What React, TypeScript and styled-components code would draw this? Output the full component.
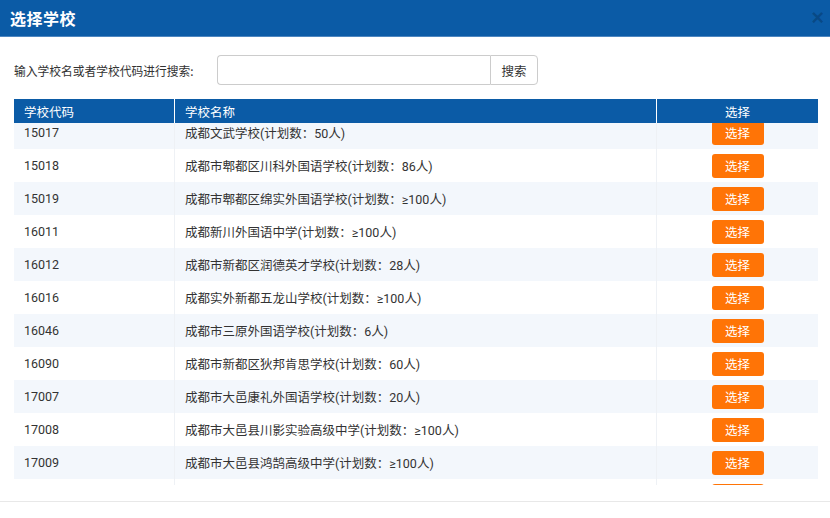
import { useLayoutEffect, useRef } from "react";
import styled, { createGlobalStyle } from "styled-components";

const GlobalStyle = createGlobalStyle`
  html, body {
    margin: 0;
    padding: 0;
    background: #ffffff;
  }
  body {
    font-family: "Noto Sans CJK SC", "Liberation Sans", sans-serif;
    color: #333;
  }
`;

const Modal = styled.div`
  width: 830px;
  height: 518px;
  display: flex;
  flex-direction: column;
  background: #fff;
  overflow: hidden;
`;

const Header = styled.div`
  height: 37px;
  flex-shrink: 0;
  display: flex;
  align-items: center;
  justify-content: space-between;
  padding: 0 10px;
  background: #0b5ba6;
  border-bottom: 1px solid #4d86c0;
  box-sizing: border-box;
`;

const Title = styled.h3`
  margin: 0;
  font-size: 16px;
  font-weight: bold;
  color: #fff;
  letter-spacing: 0.5px;
`;

const Close = styled.span`
  font-family: "Liberation Sans", sans-serif;
  font-size: 22px;
  font-weight: bold;
  color: rgba(0, 0, 0, 0.2);
  line-height: 1;
  margin-right: -4px;
`;

const Body = styled.div`
  flex: 1;
  padding: 18px 12px 0 14px;
  display: flex;
  flex-direction: column;
`;

const SearchRow = styled.div`
  display: flex;
  align-items: center;
  height: 30px;
  margin-bottom: 14px;
`;

const Label = styled.label`
  font-size: 12.5px;
  color: #333;
  width: 203px;
  transform: scaleX(0.94);
  transform-origin: left center;
  white-space: nowrap;
`;

const Input = styled.input`
  width: 273px;
  height: 30px;
  box-sizing: border-box;
  border: 1px solid #ccc;
  border-right: none;
  border-radius: 4px 0 0 4px;
  padding: 0 8px;
  outline: none;
`;

const SearchButton = styled.button`
  width: 48px;
  height: 30px;
  box-sizing: border-box;
  border: 1px solid #ccc;
  border-radius: 0 4px 4px 0;
  background: #fff;
  color: #333;
  font-family: inherit;
  font-size: 12.5px;
  padding: 0;
`;

const Table = styled.div`
  width: 804px;
  display: flex;
  flex-direction: column;
`;

const Row = styled.div<{ $striped?: boolean }>`
  display: grid;
  grid-template-columns: 160px 482px 1fr;
  height: 33px;
  flex-shrink: 0;
  background: ${p => (p.$striped ? "#f3f7fc" : "#fff")};
`;

const HeadRow = styled(Row)`
  height: 24px;
  background: #0b5ba6;
`;

const HeadCell = styled.div<{ $center?: boolean }>`
  display: flex;
  align-items: center;
  justify-content: ${p => (p.$center ? "center" : "flex-start")};
  padding: 0 10px;
  font-size: 12.5px;
  color: #fff;
  & + & {
    border-left: 1px solid #fff;
  }
`;

const Cell = styled.div<{ $center?: boolean }>`
  display: flex;
  align-items: center;
  justify-content: ${p => (p.$center ? "center" : "flex-start")};
  padding: 0 10px;
  font-family: Roboto, "Noto Sans CJK SC", sans-serif;
  font-size: 12.5px;
  color: #333;
  white-space: nowrap;
  & + & {
    border-left: 1px solid #eef1f5;
  }
`;

const Scroller = styled.div`
  height: 362px;
  overflow-y: auto;
  scrollbar-width: none;
  display: flex;
  flex-direction: column;
  &::-webkit-scrollbar {
    display: none;
  }
`;

const PickButton = styled.button`
  width: 52px;
  height: 24px;
  border: none;
  border-radius: 3px;
  background: #ff7406;
  color: #fff;
  font-family: "Noto Sans CJK SC", sans-serif;
  font-size: 12.5px;
  padding: 0;
`;

const Footer = styled.div`
  height: 16px;
  flex-shrink: 0;
  border-top: 1px solid #e8e8e8;
`;

const schools = [
  ["15017", "成都文武学校(计划数：50人)"],
  ["15018", "成都市郫都区川科外国语学校(计划数：86人)"],
  ["15019", "成都市郫都区绵实外国语学校(计划数：≥100人)"],
  ["16011", "成都新川外国语中学(计划数：≥100人)"],
  ["16012", "成都市新都区润德英才学校(计划数：28人)"],
  ["16016", "成都实外新都五龙山学校(计划数：≥100人)"],
  ["16046", "成都市三原外国语学校(计划数：6人)"],
  ["16090", "成都市新都区狄邦肯思学校(计划数：60人)"],
  ["17007", "成都市大邑康礼外国语学校(计划数：20人)"],
  ["17008", "成都市大邑县川影实验高级中学(计划数：≥100人)"],
  ["17009", "成都市大邑县鸿鹄高级中学(计划数：≥100人)"],
  ["17010", "成都市大邑县安仁中学(计划数：≥100人)"],
  ["17011", "成都市大邑县晋原中学(计划数：≥100人)"],
];

function App() {
  const scrollRef = useRef<HTMLDivElement>(null);

  useLayoutEffect(() => {
    if (scrollRef.current) scrollRef.current.scrollTop = 7;
  }, []);

  return (
    <>
      <GlobalStyle />
      <Modal>
        <Header>
          <Title>选择学校</Title>
          <Close>×</Close>
        </Header>
        <Body>
          <SearchRow>
            <Label>输入学校名或者学校代码进行搜索:</Label>
            <Input />
            <SearchButton>搜索</SearchButton>
          </SearchRow>
          <Table>
            <HeadRow>
              <HeadCell>学校代码</HeadCell>
              <HeadCell>学校名称</HeadCell>
              <HeadCell $center>选择</HeadCell>
            </HeadRow>
            <Scroller ref={scrollRef}>
              {schools.map(([code, name], i) => (
                <Row key={code} $striped={i % 2 === 0}>
                  <Cell>{code}</Cell>
                  <Cell>{name}</Cell>
                  <Cell $center>
                    <PickButton>选择</PickButton>
                  </Cell>
                </Row>
              ))}
            </Scroller>
          </Table>
        </Body>
        <Footer />
      </Modal>
    </>
  );
}

export default App;
